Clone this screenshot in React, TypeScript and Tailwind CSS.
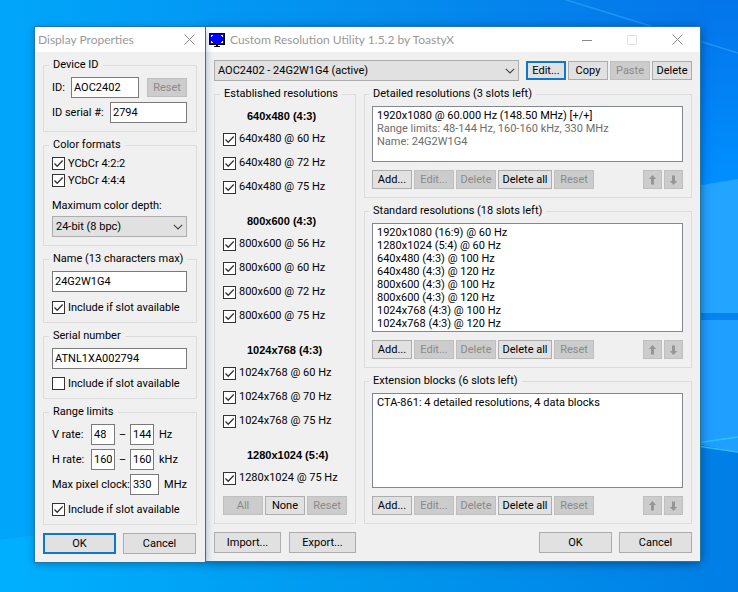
import { useId, useState } from 'react'
import type { ReactNode } from 'react'
import clsx from 'clsx'

const ESTABLISHED = [
  { title: '640x480 (4:3)', modes: ['640x480 @ 60 Hz', '640x480 @ 72 Hz', '640x480 @ 75 Hz'] },
  { title: '800x600 (4:3)', modes: ['800x600 @ 56 Hz', '800x600 @ 60 Hz', '800x600 @ 72 Hz', '800x600 @ 75 Hz'] },
  { title: '1024x768 (4:3)', modes: ['1024x768 @ 60 Hz', '1024x768 @ 70 Hz', '1024x768 @ 75 Hz'] },
  { title: '1280x1024 (5:4)', modes: ['1280x1024 @ 75 Hz'] }
]

const DETAILED = [
  { text: '1920x1080 @ 60.000 Hz (148.50 MHz) [+/+]' },
  { text: 'Range limits: 48-144 Hz, 160-160 kHz, 330 MHz', muted: true },
  { text: 'Name: 24G2W1G4', muted: true }
]

const STANDARD = [
  { text: '1920x1080 (16:9) @ 60 Hz' },
  { text: '1280x1024 (5:4) @ 60 Hz' },
  { text: '640x480 (4:3) @ 100 Hz' },
  { text: '640x480 (4:3) @ 120 Hz' },
  { text: '800x600 (4:3) @ 100 Hz' },
  { text: '800x600 (4:3) @ 120 Hz' },
  { text: '1024x768 (4:3) @ 100 Hz' },
  { text: '1024x768 (4:3) @ 120 Hz' }
]

const EXTENSIONS = [{ text: 'CTA-861: 4 detailed resolutions, 4 data blocks' }]

type Item = { text: string, muted?: boolean }

function Button ({ children, className, disabled, primary, label }: { children: ReactNode, className?: string, disabled?: boolean, primary?: boolean, label?: string }) {
  return (
    <button
      type="button"
      disabled={disabled}
      aria-label={label}
      className={clsx(
        'flex shrink-0 items-center justify-center whitespace-nowrap',
        disabled && 'border border-[#bfbfbf] bg-[#cccccc] text-[#8a8a8a]',
        !disabled && primary && 'border-2 border-[#0f78cc] bg-[#e1e1e1]',
        !disabled && !primary && 'border border-[#adadad] bg-[#e1e1e1]',
        className
      )}
    >
      {children}
    </button>
  )
}

function Group ({ title, className, children }: { title: string, className?: string, children: ReactNode }) {
  return (
    <fieldset className={clsx('min-w-0 border border-[#dcdcdc] pb-2', className)}>
      <legend className="-ml-[3px] px-1 whitespace-nowrap">{title}</legend>
      {children}
    </fieldset>
  )
}

function Checkbox ({ label, checked = false }: { label: string, checked?: boolean }) {
  const [on, setOn] = useState(checked)
  return (
    <label className="flex h-[13px] items-center gap-[3px] whitespace-nowrap">
      <span className="relative flex">
        <input
          type="checkbox"
          checked={on}
          onChange={() => { setOn(!on) }}
          className="peer size-[13px] appearance-none border border-[#333333] bg-white"
        />
        <svg viewBox="0 0 13 13" className="pointer-events-none invisible absolute inset-0 peer-checked:visible" fill="none" stroke="#333333" strokeWidth="1.3">
          <path d="M2.5 6.5 L5.2 9.2 L10.7 3.5" />
        </svg>
      </span>
      {label}
    </label>
  )
}

function Field ({ value, className, id, label }: { value: string, className?: string, id?: string, label?: string }) {
  return (
    <input
      id={id}
      aria-label={label}
      type="text"
      defaultValue={value}
      className={clsx('h-[21px] min-w-0 border border-[#7a7a7a] bg-white px-[2px]', className)}
    />
  )
}

function Dropdown ({ value, id, label, className }: { value: string, id?: string, label?: string, className?: string }) {
  return (
    <div className={clsx('relative', className)}>
      <select id={id} aria-label={label} className="block h-[21px] w-full appearance-none border border-[#adadad] bg-[#e1e1e1] px-[3px]">
        <option>{value}</option>
      </select>
      <svg viewBox="0 0 10 6" className="pointer-events-none absolute top-2 right-1 h-[6px] w-[10px]" fill="none" stroke="#444444" strokeWidth="1.1">
        <path d="M0.8 0.8 L5 5 L9.2 0.8" />
      </svg>
    </div>
  )
}

function Arrow ({ down }: { down?: boolean }) {
  return (
    <svg viewBox="0 0 9 10" className={clsx('h-[10px] w-[9px]', down && 'rotate-180')} fill="#969696">
      <path d="M4.5 0 L8.2 4 H6 V9.5 H3 V4 H0.8 Z" />
    </svg>
  )
}

function CloseIcon () {
  return (
    <svg viewBox="0 0 11 11" className="size-[11px]" fill="none" stroke="#8a8a8a" strokeWidth="1">
      <path d="M0.5 0.5 L10.5 10.5 M10.5 0.5 L0.5 10.5" />
    </svg>
  )
}

function ListGroup ({ title, items, listClass }: { title: string, items: Item[], listClass: string }) {
  return (
    <Group title={title} className="pr-2 pl-[7px]">
      <select size={8} aria-label={title} className={clsx('mt-[5px] block w-full appearance-none overflow-hidden border border-[#828790] bg-white pt-[2px]', listClass)}>
        {items.map(item => (
          <option key={item.text} className={clsx('h-[13px] min-h-0 p-0 pl-1 leading-[13px]', item.muted && 'text-[#6d6d6d]')}>{item.text}</option>
        ))}
      </select>
      <div className="mt-2 flex h-[19px] gap-[2px]">
        <Button className="w-10">Add...</Button>
        <Button className="w-10" disabled>Edit...</Button>
        <Button className="w-10" disabled>Delete</Button>
        <Button className="w-[54px]">Delete all</Button>
        <Button className="w-10" disabled>Reset</Button>
        <Button className="ml-auto w-[19px]" disabled label="Move up"><Arrow /></Button>
        <Button className="w-[19px]" disabled label="Move down"><Arrow down /></Button>
      </div>
    </Group>
  )
}

function DisplayProperties () {
  const id = useId()
  return (
    <section className="relative z-10 w-[170px] shrink-0 bg-[#f0f0f0] shadow-[0_0_0_1px_#1f77a8,0_2px_8px_rgba(0,40,80,0.4)]">
      <header className="flex h-[25px] items-center justify-between bg-white pr-[10px] pl-[3px] font-[Lato,'Open_Sans',sans-serif] text-[12px] text-[#999999]">
        <h1>Display Properties</h1>
        <button type="button" aria-label="Close"><CloseIcon /></button>
      </header>
      <div className="flex flex-col gap-[6px] px-2 pt-[6px] pb-2">
        <Group title="Device ID" className="pr-[9px] pl-2">
          <div className="mt-[5px] flex items-center">
            <label htmlFor={`${id}-id`} className="w-[19px]">ID:</label>
            <Field id={`${id}-id`} value="AOC2402" className="w-[68px]" />
            <Button className="ml-auto h-[19px] w-10" disabled>Reset</Button>
          </div>
          <div className="mt-1 flex items-center">
            <label htmlFor={`${id}-serial`} className="w-[58px] whitespace-nowrap">ID serial #:</label>
            <Field id={`${id}-serial`} value="2794" className="flex-1" />
          </div>
        </Group>
        <Group title="Color formats" className="pr-[9px] pl-2">
          <div className="mt-[5px] flex flex-col gap-1">
            <Checkbox label="YCbCr 4:2:2" checked />
            <Checkbox label="YCbCr 4:4:4" checked />
          </div>
          <label htmlFor={`${id}-depth`} className="mt-3 mb-[3px] block">Maximum color depth:</label>
          <Dropdown id={`${id}-depth`} value="24-bit (8 bpc)" />
        </Group>
        <Group title="Name (13 characters max)" className="pr-[9px] pl-2">
          <div className="mt-[5px] flex flex-col gap-[9px]">
            <Field label="Name" value="24G2W1G4" />
            <Checkbox label="Include if slot available" checked />
          </div>
        </Group>
        <Group title="Serial number" className="pr-[9px] pl-2">
          <div className="mt-[5px] flex flex-col gap-2">
            <Field label="Serial number" value="ATNL1XA002794" />
            <Checkbox label="Include if slot available" />
          </div>
        </Group>
        <Group title="Range limits" className="pr-[9px] pl-2">
          <div className="mt-[5px] flex flex-col gap-1">
            <div className="flex items-center">
              <span className="w-[39px]">V rate:</span>
              <Field label="Minimum V rate" value="48" className="w-6" />
              <span className="w-[15px] text-center">–</span>
              <Field label="Maximum V rate" value="144" className="w-6" />
              <span className="ml-[5px]">Hz</span>
            </div>
            <div className="flex items-center">
              <span className="w-[39px]">H rate:</span>
              <Field label="Minimum H rate" value="160" className="w-6" />
              <span className="w-[15px] text-center">–</span>
              <Field label="Maximum H rate" value="160" className="w-6" />
              <span className="ml-[5px]">kHz</span>
            </div>
            <div className="flex items-center">
              <label htmlFor={`${id}-clock`} className="w-[78px] whitespace-nowrap">Max pixel clock:</label>
              <Field id={`${id}-clock`} value="330" className="w-[30px]" />
              <span className="ml-[5px]">MHz</span>
            </div>
          </div>
          <div className="mt-2">
            <Checkbox label="Include if slot available" checked />
          </div>
        </Group>
        <div className="mt-[2px] flex h-[21px] gap-[7px]">
          <Button className="w-[73px]" primary>OK</Button>
          <Button className="w-[73px]">Cancel</Button>
        </div>
      </div>
    </section>
  )
}

function MonitorIcon () {
  return (
    <svg viewBox="0 0 16 14" className="h-[14px] w-4" shapeRendering="crispEdges">
      <rect width="16" height="12" fill="#000000" />
      <rect x="1" y="1" width="14" height="10" fill="#0000ff" />
      <rect x="7" y="12" width="2" height="1" fill="#000000" />
      <rect x="5" y="13" width="6" height="1" fill="#000000" />
      <path d="M2.5 4 V2.5 H4 M12 2.5 H13.5 V4 M2.5 8 V9.5 H4 M12 9.5 H13.5 V8" fill="none" stroke="#ffffff" />
    </svg>
  )
}

function ResolutionUtility () {
  return (
    <section className="min-w-0 flex-1 bg-[#f0f0f0] shadow-[0_0_0_1px_#1f77a8,0_2px_10px_rgba(0,30,70,0.6)]">
      <header className="flex h-[25px] items-center bg-white pr-[17px] pl-[3px] font-[Lato,'Open_Sans',sans-serif] text-[12px] text-[#999999]">
        <MonitorIcon />
        <h1 className="ml-[5px] flex-1 whitespace-nowrap">Custom Resolution Utility 1.5.2 by ToastyX</h1>
        <div className="flex items-center gap-[35px]">
          <button type="button" aria-label="Minimize">
            <svg viewBox="0 0 10 10" className="size-[10px]"><path d="M0 5.5 H10" stroke="#8a8a8a" /></svg>
          </button>
          <button type="button" aria-label="Maximize" disabled>
            <svg viewBox="0 0 10 10" className="size-[10px]"><rect x="0.5" y="0.5" width="9" height="9" fill="none" stroke="#e4e4e4" /></svg>
          </button>
          <button type="button" aria-label="Close"><CloseIcon /></button>
        </div>
      </header>
      <div className="p-2">
        <div className="flex items-center gap-[2px]">
          <Dropdown label="Display" value="AOC2402 - 24G2W1G4 (active)" className="mr-[5px] min-w-0 flex-1" />
          <Button className="h-[19px] w-10" primary>Edit...</Button>
          <Button className="h-[19px] w-10">Copy</Button>
          <Button className="h-[19px] w-10" disabled>Paste</Button>
          <Button className="h-[19px] w-10">Delete</Button>
        </div>
        <div className="mt-[6px] flex gap-2">
          <Group title="Established resolutions" className="w-[142px] shrink-0 px-2">
            <div className="mt-2 flex flex-col gap-[15px]">
              {ESTABLISHED.map(group => (
                <section key={group.title}>
                  <h2 className="h-[18px] pl-6 font-['Liberation_Sans',Arial,sans-serif] font-bold">{group.title}</h2>
                  {group.modes.map(mode => (
                    <div key={mode} className="flex h-6 items-center">
                      <Checkbox label={mode} checked />
                    </div>
                  ))}
                </section>
              ))}
            </div>
            <div className="mt-[6px] flex h-[19px] gap-[2px]">
              <Button className="w-10" disabled>All</Button>
              <Button className="w-10">None</Button>
              <Button className="w-10" disabled>Reset</Button>
            </div>
          </Group>
          <div className="flex min-w-0 flex-1 flex-col gap-[6px]">
            <ListGroup title="Detailed resolutions (3 slots left)" items={DETAILED} listClass="h-14" />
            <ListGroup title="Standard resolutions (18 slots left)" items={STANDARD} listClass="h-[109px]" />
            <ListGroup title="Extension blocks (6 slots left)" items={EXTENSIONS} listClass="h-[95px]" />
          </div>
        </div>
        <div className="mt-2 flex h-[21px] justify-between">
          <div className="flex gap-2">
            <Button className="w-[67px]">Import...</Button>
            <Button className="w-[67px]">Export...</Button>
          </div>
          <div className="flex gap-[7px]">
            <Button className="w-[73px]">OK</Button>
            <Button className="w-[73px]">Cancel</Button>
          </div>
        </div>
      </div>
    </section>
  )
}

function Wallpaper () {
  return (
    <svg viewBox="0 0 738 592" preserveAspectRatio="none" className="absolute inset-0 size-full">
      <defs>
        <linearGradient id="sky" x1="0" y1="0" x2="1" y2="0">
          <stop offset="0" stopColor="#00a6fa" />
          <stop offset="0.5" stopColor="#048eee" />
          <stop offset="1" stopColor="#0474ea" />
        </linearGradient>
        <linearGradient id="floor" x1="0" y1="0" x2="1" y2="0">
          <stop offset="0" stopColor="#00b0ff" />
          <stop offset="0.5" stopColor="#0098ee" />
          <stop offset="1" stopColor="#007ee6" />
        </linearGradient>
        <linearGradient id="side" x1="0" y1="0" x2="0" y2="1">
          <stop offset="0" stopColor="#0474ea" />
          <stop offset="1" stopColor="#0090ff" />
        </linearGradient>
      </defs>
      <rect width="738" height="592" fill="url(#sky)" />
      <path d="M0 540 L700 445 L738 452 V592 H0 Z" fill="url(#floor)" />
      <path d="M700 0 H738 V182 L700 187 Z" fill="url(#side)" />
      <path d="M690 187 L738 179 V313 H690 Z" fill="#22a4ff" />
      <path d="M690 313 H738 V320 H690 Z" fill="#0784ee" />
      <path d="M690 320 H738 V452 L690 443 Z" fill="#1f9fff" />
      <path d="M560 -2 L738 53" stroke="#35a5fa" strokeWidth="1.5" opacity="0.6" />
      <path d="M690 444 L738 437 M690 445 L738 452" stroke="#2cc0fb" strokeWidth="1.5" />
    </svg>
  )
}

export default function App () {
  return (
    <main className="relative min-h-screen bg-[#0096f3] font-[Roboto,Tahoma,sans-serif] text-[11px] leading-[14px] text-black">
      <Wallpaper />
      <div className="relative flex items-start gap-px pt-[27px] pr-[38px] pb-[30px] pl-[35px]">
        <DisplayProperties />
        <ResolutionUtility />
      </div>
    </main>
  )
}
